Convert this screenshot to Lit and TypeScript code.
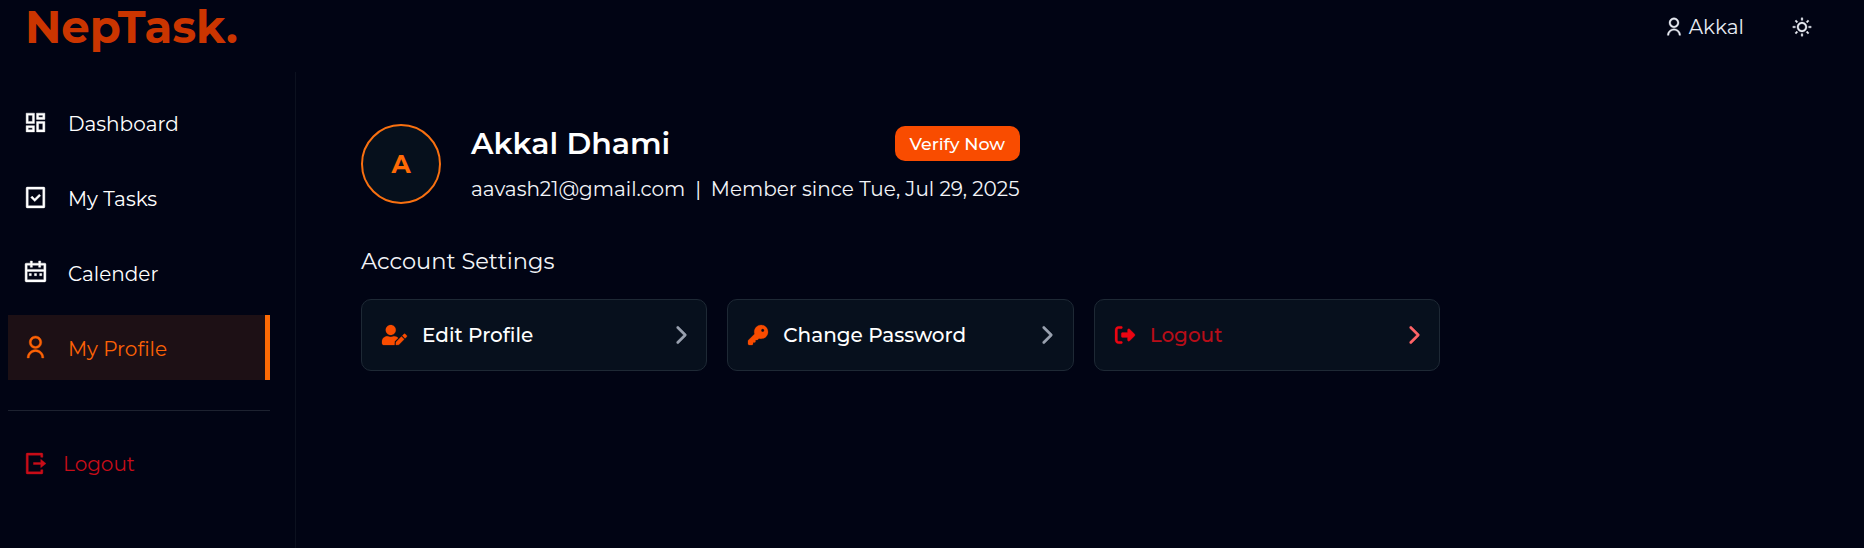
import { LitElement, html, css, svg } from "lit";
import { customElement, property } from "lit/decorators.js";
import { classMap } from "lit/directives/class-map.js";

const ICONS: Record<string, { w: number; h: number; d: string }> = {
  dashboard: { w: 24, h: 24, d: "M19 5v2h-4V5h4M9 5v6H5V5h4m10 8v6h-4v-6h4M9 17v2H5v-2h4M21 3h-8v6h8V3zM11 3H3v10h8V3zm10 8h-8v10h8V11zm-10 4H3v6h8v-6z" },
  task: { w: 24, h: 24, d: "M21 2.9918V21.0082C21 21.556 20.5551 22 20.0066 22H3.9934C3.44476 22 3 21.5447 3 21.0082V2.9918C3 2.44405 3.44495 2 3.9934 2H20.0066C20.5552 2 21 2.45531 21 2.9918ZM19 4H5V20H19V4ZM11.2929 13.1213L15.5355 8.87868L16.9497 10.2929L11.2929 15.9497L7.40381 12.0607L8.81802 10.6464L11.2929 13.1213Z" },
  calendar: { w: 24, h: 24, d: "M9 1V3H15V1H17V3H21C21.5523 3 22 3.44772 22 4V20C22 20.5523 21.5523 21 21 21H3C2.44772 21 2 20.5523 2 20V4C2 3.44772 2.44772 3 3 3H7V1H9ZM20 11H4V19H20V11ZM8 13V15H6V13H8ZM13 13V15H11V13H13ZM18 13V15H16V13H18ZM7 5H4V9H20V5H17V7H15V5H9V7H7V5Z" },
  user: { w: 24, h: 24, d: "M4 22C4 17.5817 7.58172 14 12 14C16.4183 14 20 17.5817 20 22H18C18 18.6863 15.3137 16 12 16C8.68629 16 6 18.6863 6 22H4ZM12 13C8.685 13 6 10.315 6 7C6 3.685 8.685 1 12 1C15.315 1 18 3.685 18 7C18 10.315 15.315 13 12 13ZM12 11C14.21 11 16 9.21 16 7C16 4.79 14.21 3 12 3C9.79 3 8 4.79 8 7C8 9.21 9.79 11 12 11Z" },
  exit: { w: 24, h: 24, d: "M5 22C4.44772 22 4 21.5523 4 21V3C4 2.44772 4.44772 2 5 2H19C19.5523 2 20 2.44772 20 3V6H18V4H6V20H18V18H20V21C20 21.5523 19.5523 22 19 22H5ZM18 16V13H11V11H18V8L23 12L18 16Z" },
  sun: { w: 24, h: 24, d: "M12 18C8.68629 18 6 15.3137 6 12C6 8.68629 8.68629 6 12 6C15.3137 6 18 8.68629 18 12C18 15.3137 15.3137 18 12 18ZM12 16C14.2091 16 16 14.2091 16 12C16 9.79086 14.2091 8 12 8C9.79086 8 8 9.79086 8 12C8 14.2091 9.79086 16 12 16ZM11 1H13V4H11V1ZM11 20H13V23H11V20ZM3.51472 4.92893L4.92893 3.51472L7.05025 5.63604L5.63604 7.05025L3.51472 4.92893ZM16.9497 18.364L18.364 16.9497L20.4853 19.0711L19.0711 20.4853L16.9497 18.364ZM19.0711 3.51472L20.4853 4.92893L18.364 7.05025L16.9497 5.63604L19.0711 3.51472ZM5.63604 16.9497L7.05025 18.364L4.92893 20.4853L3.51472 19.0711L5.63604 16.9497ZM23 11V13H20V11H23ZM4 11V13H1V11H4Z" },
  edit: { w: 640, h: 512, d: "M224 256c70.7 0 128-57.3 128-128S294.7 0 224 0 96 57.3 96 128s57.3 128 128 128zm89.6 32h-16.7c-22.2 10.2-46.9 16-72.9 16s-50.6-5.8-72.9-16h-16.7C60.2 288 0 348.2 0 422.4V464c0 26.5 21.5 48 48 48h274.9c-2.4-6.8-3.4-14-2.6-21.3l6.8-60.9 1.2-11.1 7.9-7.9 77.3-77.3c-24.5-27.7-60-45.5-99.9-45.5zm45.3 145.3l-6.8 61c-1.1 10.2 7.5 18.8 17.6 17.6l60.9-6.8 137.9-137.9-71.7-71.7-137.9 137.8zM633 268.9L595.1 231c-9.3-9.3-24.5-9.3-33.8 0l-37.8 37.8-4.1 4.1 71.8 71.7 41.8-41.8c9.3-9.5 9.3-24.7 0-33.9z" },
  key: { w: 512, h: 512, d: "M336 352c97.2 0 176-78.8 176-176S433.2 0 336 0S160 78.8 160 176c0 18.7 2.9 36.8 8.3 53.7L7 391c-4.5 4.5-7 10.6-7 17l0 80c0 13.3 10.7 24 24 24l80 0c13.3 0 24-10.7 24-24l0-40 40 0c13.3 0 24-10.7 24-24l0-40 40 0c6.4 0 12.5-2.5 17-7l33.3-33.3c16.9 5.4 35 8.3 53.7 8.3zM376 96a40 40 0 1 1 0 80 40 40 0 1 1 0-80z" },
  leave: { w: 512, h: 512, d: "M377.9 105.9L500.7 228.7c7.2 7.2 11.3 17.1 11.3 27.3s-4.1 20.1-11.3 27.3L377.9 406.1c-6.4 6.4-15 9.9-24 9.9c-18.7 0-33.9-15.2-33.9-33.9l0-62.1-128 0c-17.7 0-32-14.3-32-32l0-64c0-17.7 14.3-32 32-32l128 0 0-62.1c0-18.7 15.2-33.9 33.9-33.9c9 0 17.6 3.6 24 9.9zM160 96L96 96c-17.7 0-32 14.3-32 32l0 256c0 17.7 14.3 32 32 32l64 0c17.7 0 32 14.3 32 32s-14.3 32-32 32l-64 0c-53 0-96-43-96-96L0 128C0 75 43 32 96 32l64 0c17.7 0 32 14.3 32 32s-14.3 32-32 32z" },
  chevron: { w: 320, h: 512, d: "M310.6 233.4c12.5 12.5 12.5 32.8 0 45.3l-192 192c-12.5 12.5-32.8 12.5-45.3 0s-12.5-32.8 0-45.3L242.7 256 73.4 86.6c-12.5-12.5-12.5-32.8 0-45.3s32.8-12.5 45.3 0l192 192z" },
};

@customElement("ui-icon")
class UiIcon extends LitElement {
  static styles = css`
    :host { display: block; flex: none; height: 20px; }
    svg { display: block; height: 100%; width: auto; overflow: visible; fill: currentColor; stroke: currentColor; }
    .line { stroke-width: 0.4; }
    .solid { stroke-width: 6; }
  `;
  @property() name = "user";
  render() {
    const i = ICONS[this.name];
    return html`<svg class=${i.w === 24 ? "line" : "solid"} viewBox="0 0 ${i.w} ${i.h}">${svg`<path d=${i.d} />`}</svg>`;
  }
}

const NAV = [
  { icon: "dashboard", label: "Dashboard" },
  { icon: "task", label: "My Tasks" },
  { icon: "calendar", label: "Calender" },
  { icon: "user", label: "My Profile", active: true },
];

const SETTINGS = [
  { icon: "edit", label: "Edit Profile" },
  { icon: "key", label: "Change Password" },
  { icon: "leave", label: "Logout", danger: true },
];

@customElement("app-root")
class AppRoot extends LitElement {
  static styles = css`
    :host {
      display: flex;
      flex-direction: column;
      height: 100vh;
      overflow: hidden;
      background: #010414;
      color: #fff;
      font: 400 20px/30px Montserrat, "Noto Sans", sans-serif;
    }
    * { box-sizing: border-box; }
    .header {
      flex: none;
      height: 72px;
      padding: 2px 52px 0 25px;
      display: flex;
      justify-content: space-between;
      align-items: flex-start;
    }
    .brand { font-size: 45px; line-height: 50px; font-weight: 700; color: #cb3500; }
    .tools { display: flex; align-items: center; gap: 48px; padding-top: 10px; color: #e8ebf2; }
    .account { display: flex; align-items: center; gap: 5px; }
    .body { flex: 1; min-height: 0; display: flex; }
    .sidebar {
      flex: none;
      width: 296px;
      padding: 18px 25px 0 8px;
      border-right: 1px solid #0c111f;
    }
    .nav { display: flex; flex-direction: column; gap: 10px; }
    .item { display: flex; align-items: center; gap: 20px; height: 65px; padding-left: 15px; }
    .item ui-icon { height: 25px; }
    .item span { padding-top: 3px; }
    .item.active { background: #1d1015; color: #fd6205; border-right: 5px solid #fd6a05; }
    .item.out { gap: 16px; padding-left: 14px; color: #c80d18; }
    .item.out span { padding-top: 1px; }
    .rule { height: 1px; margin: 30px 0 20px; background: #1d2230; }
    .main { flex: 1; padding: 52px 0 0 65px; }
    .profile { display: flex; gap: 30px; }
    .avatar {
      width: 80px;
      height: 80px;
      border-radius: 50%;
      border: 2px solid #f97010;
      background: #06101c;
      color: #ff6a05;
      display: flex;
      align-items: center;
      justify-content: center;
      font-size: 25px;
      font-weight: 700;
    }
    .info { width: 548.5px; }
    .line { display: flex; justify-content: space-between; align-items: center; height: 39px; margin-bottom: 11px; }
    .name { font-size: 30px; font-weight: 600; }
    .verify {
      height: 35px;
      padding: 0 14.5px;
      border: 0;
      border-radius: 10px;
      background: #f94c00;
      color: #fff;
      font: 500 17.5px/35px Montserrat, "Noto Sans", sans-serif;
    }
    .meta { display: flex; justify-content: space-between; white-space: nowrap; color: #f3f4f8; }
    .heading { margin-top: 40px; font-size: 22.5px; line-height: 35px; color: #f3f4f8; }
    .cards { display: grid; grid-template-columns: repeat(3, 1fr); gap: 20px; width: 1079px; margin-top: 20px; }
    .card {
      display: flex;
      align-items: center;
      gap: 15px;
      height: 72px;
      padding: 0 20px;
      border: 1px solid #1e2935;
      border-radius: 10px;
      background: #07101d;
      font-weight: 500;
    }
    .card .lead { color: #f94c00; }
    .card .go { margin-left: auto; color: #99a1af; }
    .card.danger { color: #b70d18; }
    .card.danger .lead { color: #eb0512; }
    .card.danger .go { color: #ff6467; }
  `;

  render() {
    return html`
      <header class="header">
        <div class="brand">NepTask.</div>
        <div class="tools">
          <div class="account"><ui-icon name="user"></ui-icon><span>Akkal</span></div>
          <ui-icon name="sun"></ui-icon>
        </div>
      </header>
      <div class="body">
        <aside class="sidebar">
          <nav class="nav">
            ${NAV.map((n) => html`
              <div class=${classMap({ item: true, active: !!n.active })}>
                <ui-icon name=${n.icon}></ui-icon><span>${n.label}</span>
              </div>`)}
          </nav>
          <div class="rule"></div>
          <div class="item out"><ui-icon name="exit"></ui-icon><span>Logout</span></div>
        </aside>
        <main class="main">
          <section class="profile">
            <div class="avatar">A</div>
            <div class="info">
              <div class="line">
                <div class="name">Akkal Dhami</div>
                <button class="verify">Verify Now</button>
              </div>
              <div class="meta"><span>aavash21@gmail.com</span><span>|</span><span>Member since Tue, Jul 29, 2025</span></div>
            </div>
          </section>
          <div class="heading">Account Settings</div>
          <section class="cards">
            ${SETTINGS.map((s) => html`
              <div class=${classMap({ card: true, danger: !!s.danger })}>
                <ui-icon class="lead" name=${s.icon}></ui-icon>
                <span>${s.label}</span>
                <ui-icon class="go" name="chevron"></ui-icon>
              </div>`)}
          </section>
        </main>
      </div>
    `;
  }
}
